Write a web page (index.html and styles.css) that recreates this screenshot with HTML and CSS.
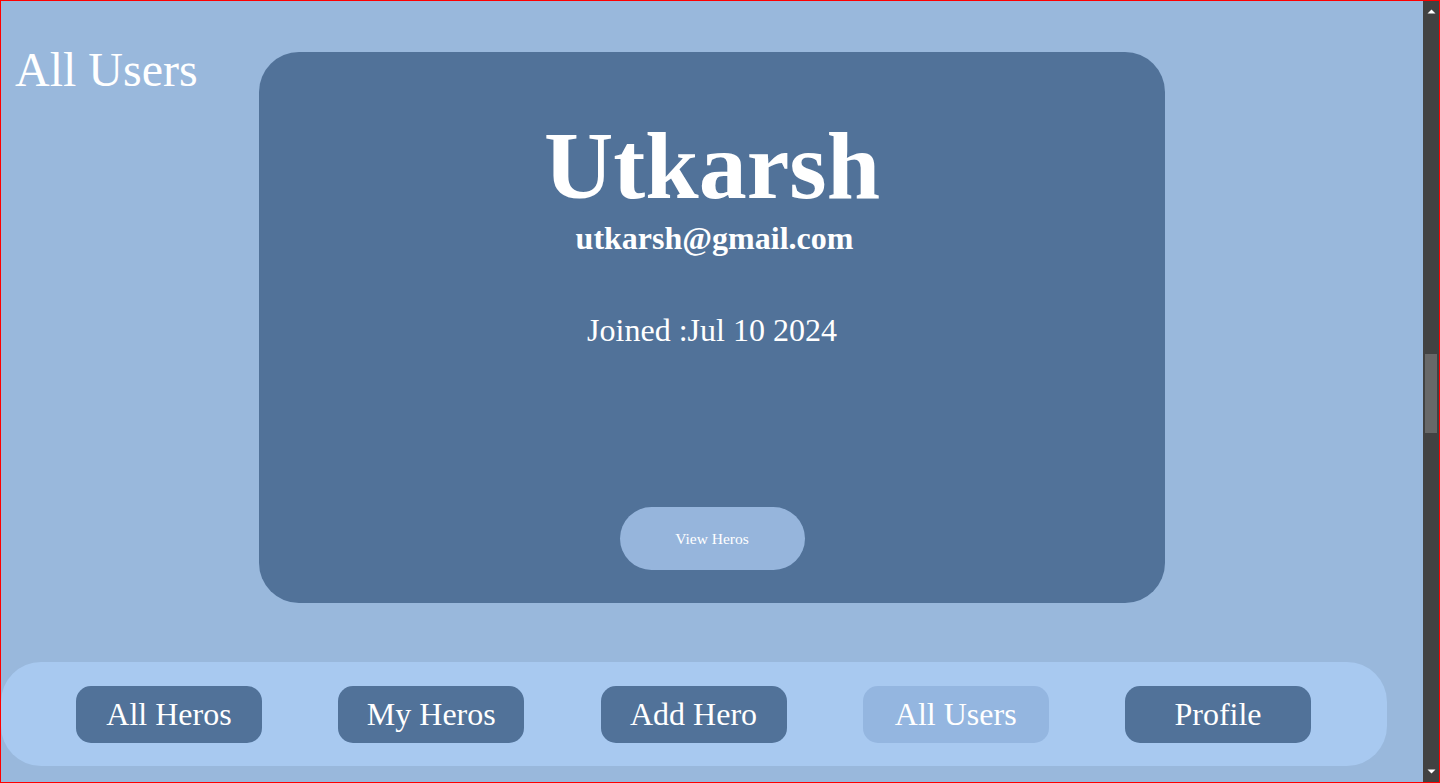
FILE: index.html
```html
<!DOCTYPE html>
<html lang="en">
<head>
<meta charset="utf-8">
<title>All Users</title>
<link rel="stylesheet" href="styles.css">
</head>
<body>
<div class="frame">
  <div class="page">
    <div class="top">
      <h1 class="title">All Users</h1>
      <div class="card">
        <h2 class="name">Utkarsh</h2>
        <div class="email">utkarsh@gmail.com</div>
        <div class="joined">Joined :Jul 10 2024</div>
        <button class="view-btn">View Heros</button>
      </div>
    </div>
    <nav class="nav">
      <a class="nav-btn">All Heros</a>
      <a class="nav-btn">My Heros</a>
      <a class="nav-btn">Add Hero</a>
      <a class="nav-btn active">All Users</a>
      <a class="nav-btn">Profile</a>
    </nav>
  </div>
  <div class="scrollbar">
    <svg class="arrow" width="16" height="16" viewBox="0 0 16 16"><polygon points="4.5,12.5 8.5,8.5 12.5,12.5" fill="#fff"/></svg>
    <div class="track"><div class="thumb"></div></div>
    <svg class="arrow" width="16" height="16" viewBox="0 0 16 16"><polygon points="4.5,3.5 8.5,7.5 12.5,3.5" fill="#fff"/></svg>
  </div>
</div>
</body>
</html>
```
FILE: styles.css
```css
html, body {
  margin: 0;
  padding: 0;
  overflow: hidden;
}
body {
  font-family: "Liberation Serif", "Times New Roman", serif;
  color: #fff;
}
.frame {
  width: 1440px;
  height: 783px;
  box-sizing: border-box;
  border: 1px solid #ff0000;
  display: flex;
  background: #99b8dc;
}
.page {
  flex: 1;
  display: flex;
  flex-direction: column;
  padding-top: 41px;
  min-width: 0;
}
.top {
  display: grid;
  grid-template-columns: 1fr 906px 1fr;
  align-items: start;
}
.title {
  margin: 0;
  padding-left: 14px;
  font-size: 48px;
  font-weight: normal;
  line-height: normal;
  white-space: nowrap;
}
.card {
  margin-top: 10px;
  height: 551px;
  box-sizing: border-box;
  background: #517299;
  border-radius: 40px;
  display: flex;
  flex-direction: column;
  align-items: center;
  padding: 66px 0 33px;
}
.name {
  margin: 0;
  font-size: 96px;
  font-weight: bold;
  line-height: 1;
}
.email {
  margin-top: 8px;
  padding-left: 5px;
  font-size: 32px;
  font-weight: bold;
  line-height: 1;
}
.joined {
  margin-top: 60px;
  font-size: 32px;
  line-height: 1;
}
.view-btn {
  margin-top: auto;
  width: 185px;
  height: 63px;
  border: none;
  border-radius: 32px;
  background: #96b5dc;
  color: #fff;
  font-family: "Liberation Serif", "Times New Roman", serif;
  font-size: 15.5px;
  padding: 0;
}
.nav {
  margin-top: 59px;
  width: 1386px;
  height: 104px;
  box-sizing: border-box;
  padding: 0 76px 0 75px;
  background: #a8c9f0;
  border-radius: 40px;
  display: flex;
  justify-content: space-between;
  align-items: center;
}
.nav-btn {
  width: 186px;
  height: 57px;
  border-radius: 15px;
  background: #517299;
  display: flex;
  align-items: center;
  justify-content: center;
  font-size: 32px;
  line-height: 1;
  color: #fff;
}
.nav-btn.active {
  background: #94b6e0;
}
.scrollbar {
  width: 16px;
  background: #424242;
  display: flex;
  flex-direction: column;
}
.arrow {
  display: block;
  flex: none;
}
.track {
  flex: 1;
  display: flex;
  flex-direction: column;
  padding-top: 337px;
}
.thumb {
  margin-left: 2px;
  width: 12px;
  height: 79px;
  background: #686868;
}
```
